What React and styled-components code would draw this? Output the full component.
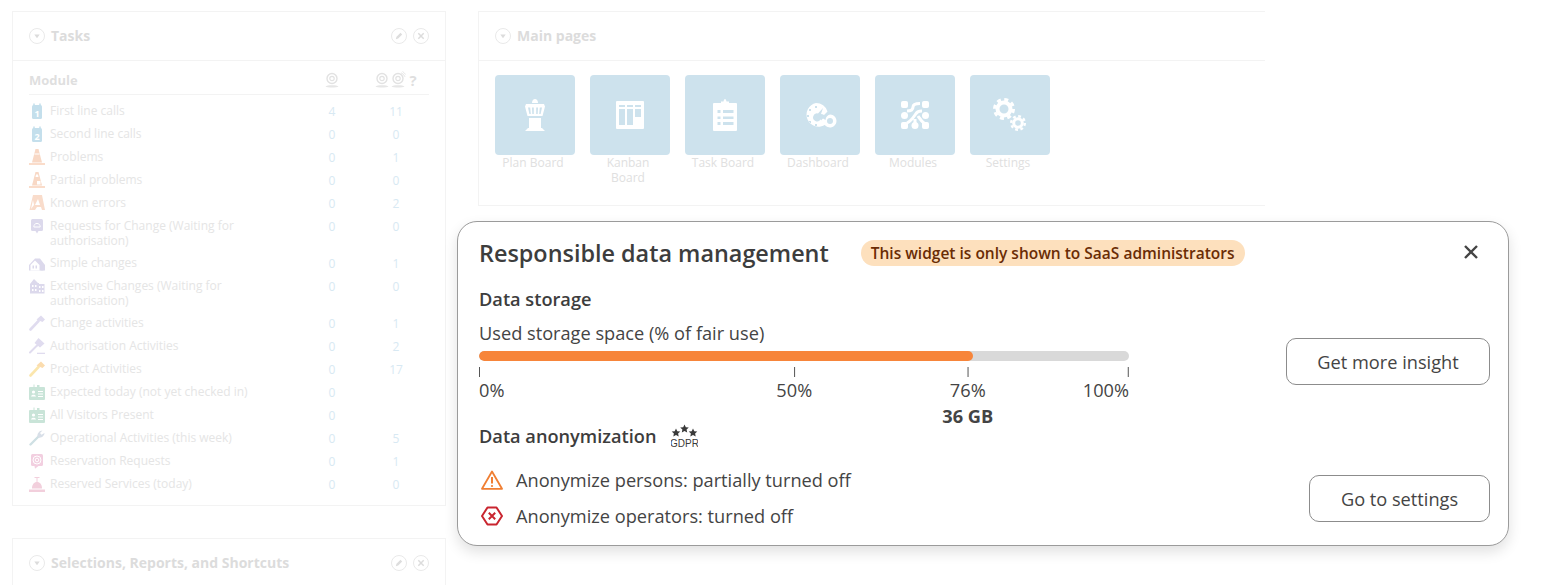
import React from 'react';
import styled, { createGlobalStyle } from 'styled-components';

const GlobalStyle = createGlobalStyle`
  html, body {
    margin: 0;
    padding: 0;
    background: #fff;
    font-family: "Open Sans", "Liberation Sans", sans-serif;
  }
`;

const Page = styled.div`
  position: relative;
  box-sizing: border-box;
  height: 585px;
  overflow: hidden;
  display: flex;
  align-items: flex-start;
  gap: 32px;
  padding: 11px 0 0 12px;
`;

const LeftColumn = styled.div`
  width: 434px;
  display: flex;
  flex-direction: column;
  gap: 32px;
`;

const Panel = styled.section`
  box-sizing: border-box;
  width: ${({ $width }) => $width}px;
  border: 1px solid #f3f3f3;
  ${({ $open }) => $open && 'border-right: none;'}
`;

const PanelHeader = styled.header`
  height: 49px;
  box-sizing: border-box;
  display: flex;
  align-items: center;
  gap: 6px;
  padding: 0 16px 1px;
  border-bottom: 1px solid #f3f3f3;
`;

const PanelTitle = styled.h2`
  margin: 0;
  flex: 1;
  font-size: 14px;
  font-weight: 700;
  color: #dcdcdc;
`;

const HeaderIcons = styled.div`
  display: flex;
  gap: 6px;
`;

const PanelBody = styled.div`
  padding: 10px 16px 10px;
`;

const TableRow = styled.div`
  display: grid;
  grid-template-columns: 21px 250px 64px 64px;
  min-height: 23px;
  align-items: start;
  color: #e5e5e5;
  font-size: 12px;
  line-height: 15px;
  padding-top: 4px;
  box-sizing: border-box;
`;

const TableHead = styled(TableRow)`
  min-height: 0;
  height: 24px;
  padding-top: 0;
  margin-bottom: 4px;
  border-bottom: 1px solid #f3f3f3;
  font-size: 13px;
  font-weight: 700;
  color: #dfdfdf;
  line-height: 18px;
`;

const HeadLabel = styled.span`
  grid-column: 1 / span 2;
`;

const HeadIcons = styled.span`
  display: flex;
  justify-content: center;
  align-items: center;
  padding-right: ${({ $pad }) => $pad || 0}px;
`;

const HelpMark = styled.span`
  margin-left: 3px;
  font-size: 15px;
`;

const RowIcon = styled.span`
  display: block;
  width: 16px;
  height: 16px;
`;

const RowLabel = styled.span`
  max-width: 205px;
  ${({ $wrap }) => $wrap && 'padding-bottom: 3px;'}
`;

const RowCount = styled.span`
  text-align: center;
  color: #d8e9f3;
  padding-top: 1px;
`;

const TileRow = styled.div`
  display: flex;
  gap: 15px;
  padding: 14px 16px 20px;
`;

const Tile = styled.div`
  width: 80px;
  display: flex;
  flex-direction: column;
`;

const TileSquare = styled.div`
  height: 80px;
  border-radius: 4px;
  background: #cde2ed;
  display: flex;
  align-items: center;
  justify-content: center;
`;

const TileLabel = styled.span`
  padding-right: 4px;
  text-align: center;
  font-size: 12px;
  line-height: 15px;
  color: #e0e0e0;
`;

const Card = styled.div`
  position: absolute;
  left: 457px;
  top: 221px;
  width: 1052px;
  height: 325px;
  box-sizing: border-box;
  padding: 16px 18px 0 21px;
  background: #fff;
  border: 1px solid #9b9b9b;
  border-radius: 20px;
  box-shadow: 0 6px 14px rgba(0, 0, 0, 0.12);
  color: #444;
`;

const CardHeader = styled.div`
  display: flex;
  align-items: center;
  height: 30px;
`;

const CardTitle = styled.h1`
  margin: 0 32px 0 0;
  font-size: 23.4px;
  line-height: 30px;
  font-weight: 600;
  color: #3d3d3d;
`;

const Badge = styled.span`
  padding: 0 10px;
  height: 26px;
  line-height: 26px;
  border-radius: 13px;
  background: #fde0bd;
  color: #6a2c05;
  font-size: 15.5px;
  font-weight: 600;
`;

const CloseButton = styled.button`
  margin: 0 11px 2px auto;
  padding: 0;
  border: 0;
  background: none;
  display: flex;
`;

const StorageRow = styled.div`
  display: flex;
  justify-content: space-between;
  align-items: flex-start;
  margin-top: 19px;
  height: 137px;
`;

const SectionTitle = styled.h3`
  display: flex;
  align-items: center;
  gap: 15px;
  margin: 0;
  font-size: 18.2px;
  line-height: 24px;
  font-weight: 600;
  color: #3d3d3d;
`;

const StorageBlock = styled.div`
  width: 650px;
`;

const UsageCaption = styled.div`
  margin-top: 10px;
  font-size: 18.2px;
  line-height: 24px;
`;

const Track = styled.div`
  height: 10px;
  margin-top: 6px;
  border-radius: 5px;
  background: #d9d9d9;
  overflow: hidden;
`;

const Fill = styled.div`
  height: 100%;
  border-radius: 5px;
  background: #f7853a;
`;

const Scale = styled.div`
  position: relative;
  height: 64px;
`;

const Mark = styled.div`
  position: absolute;
  top: 6px;
  display: flex;
  flex-direction: column;
  align-items: ${({ $align }) => $align};
  transform: translateX(${({ $shift }) => $shift});
  font-size: 18.2px;
  line-height: 24px;
`;

const Tick = styled.i`
  display: block;
  width: 1px;
  height: 10px;
  background: #555;
`;

const MarkLabel = styled.span`
  margin-top: 1px;
`;

const MarkValue = styled.strong`
  margin-top: 2px;
  font-weight: 700;
`;

const OutlineButton = styled.button`
  box-sizing: border-box;
  height: 47px;
  width: ${({ $width }) => $width}px;
  margin-top: ${({ $top }) => $top}px;
  background: #fff;
  border: 1px solid #8c8c8c;
  border-radius: 10px;
  color: #444;
  font-family: inherit;
  font-size: 18.2px;
`;

const AnonymRow = styled.div`
  display: flex;
  justify-content: space-between;
  align-items: flex-start;
`;

const StatusList = styled.ul`
  list-style: none;
  margin: 20px 0 0;
  padding: 0 0 0 2px;
  display: flex;
  flex-direction: column;
  gap: 12px;
`;

const StatusItem = styled.li`
  display: flex;
  align-items: center;
  gap: 13px;
  font-size: 18.2px;
  line-height: 24px;
`;

const GdprMark = styled.svg`
  display: block;
`;

const Ring = ({ children }) => (
  <svg width="16" height="16" viewBox="0 0 16 16" fill="none">
    <circle cx="8" cy="8" r="7.5" stroke="#e9e9e9" />
    {children}
  </svg>
);

const ToggleIcon = () => (
  <Ring>
    <path d="M5.3 6.5h5.4L8 10.2z" fill="#dcdcdc" />
  </Ring>
);

const EditIcon = () => (
  <Ring>
    <path d="M4.8 11.2l.7-2.4 4-4 1.7 1.7-4 4z" fill="#dddddd" />
  </Ring>
);

const DismissIcon = () => (
  <Ring>
    <path d="M5.3 5.3l5.4 5.4M10.7 5.3l-5.4 5.4" stroke="#dcdcdc" strokeWidth="1.5" />
  </Ring>
);

const OperatorIcon = ({ second }) => (
  <svg width="16" height="18" viewBox="0 0 16 18" fill="none">
    <circle cx="8" cy="7.500" r="5" stroke="#e2e2e2" strokeWidth="1.4" />
    <circle cx="8" cy="7.500" r="2.200" stroke="#e2e2e2" strokeWidth="1.2" />
    <path d="M1.500 15.500c1.500-1.800 11.500-1.800 13 0-1.500 1.400-11.500 1.400-13 0z" fill="#e6e6e6" />
    {second && <path d="M11 1.800a7 7 0 0 1 4 4M12.500.5a8 8 0 0 1 3 3" stroke="#e6e6e6" />}
  </svg>
);

const ICONS = {
  call1: (
    <>
      <rect x="3" y="2" width="10" height="14" rx="1.500" fill="#c4dfec" />
      <path d="M5 .5v3M11 .5v3" stroke="#c4dfec" strokeWidth="1.500" />
      <text x="8" y="13.500" textAnchor="middle" fontSize="9" fontWeight="700" fill="#fff" fontFamily="Open Sans">1</text>
    </>
  ),
  call2: (
    <>
      <rect x="3" y="2" width="10" height="14" rx="1.500" fill="#c4dfec" />
      <path d="M5 .5v3M11 .5v3" stroke="#c4dfec" strokeWidth="1.500" />
      <text x="8" y="13.500" textAnchor="middle" fontSize="9" fontWeight="700" fill="#fff" fontFamily="Open Sans">2</text>
    </>
  ),
  cone: (
    <>
      <path d="M6.500 0h3L13 13.500H3z" fill="#f8d8c5" />
      <path d="M5.400 5h5.200" stroke="#fff" />
      <path d="M0 15h16" stroke="#f8d0b8" strokeWidth="1.500" />
    </>
  ),
  partial: (
    <>
      <path d="M6.500 0h3L13 13.500H3z" fill="#f8d8c5" />
      <path d="M7 2.500h2l.5 2.500h-3zM8 9h3.500v3.500H8z" fill="#fff" />
      <path d="M0 15h16" stroke="#f8d0b8" strokeWidth="1.500" />
    </>
  ),
  errors: (
    <>
      <path d="M4 0h9l3 15h-3l-1-3H8l-2 3H.5z" fill="#f9dccb" />
      <path d="M9 4l2 6H6z" fill="#fff" />
      <path d="M4 5l1 5-3 4z" fill="#fff" />
    </>
  ),
  request: (
    <>
      <rect x="2" y="1" width="12" height="12" rx="1.500" fill="#dcd9ec" />
      <path d="M6.500 13h3L8 15.500z" fill="#dcd9ec" />
      <path d="M4.800 9h6.400c0-2.200-1.400-3.600-3.200-3.600S4.800 6.800 4.800 9z" stroke="#fff" fill="none" />
    </>
  ),
  house: (
    <>
      <path d="M0 10L6 3.500h5L16 10v5.500H0z" fill="#dcd9ec" />
      <path d="M1.500 10L6 5.500 10.500 10v5.500h-9z" fill="#fff" />
      <path d="M3.500 10.500h1.500v3H3.500zM6.500 10.500H8v3H6.500zM11.500 11h3v4.500h-3z" fill="#dcd9ec" />
    </>
  ),
  building: (
    <>
      <path d="M1 6l4-5 4 4h1v1h5.500v9.500H1z" fill="#dcd9ec" />
      <path d="M3 7h1.500v2H3zM6 7h1.500v2H6zM3 11h1.500v2H3zM6 11h1.500v2H6zM10 8h1.500v2H10zM13 8h1.500v2H13zM10 12h1.500v2H10zM13 12h1.500v2H13z" fill="#fff" />
    </>
  ),
  hammer: (
    <>
      <path d="M1.500 14.500L9.500 6" stroke="#e0dcef" strokeWidth="2.600" strokeLinecap="round" />
      <path d="M7.500 4.500L12 .5l4 4-2.500 2.500z" fill="#e0dcef" />
    </>
  ),
  gavel: (
    <>
      <path d="M1 14.500L8 7.500" stroke="#e0dcef" strokeWidth="2" strokeLinecap="round" />
      <path d="M5.500 5L9.500 0l6 5.500-4.500 4z" fill="#e0dcef" />
      <path d="M8 15.500h8" stroke="#e0dcef" strokeWidth="1.600" />
    </>
  ),
  project: (
    <>
      <path d="M1.500 14.500L9.500 6" stroke="#fbe6ad" strokeWidth="2.600" strokeLinecap="round" />
      <path d="M7.500 4.500L12 .5l4 4-2.500 2.500z" fill="#fbdcae" />
    </>
  ),
  visitor: (
    <>
      <rect x="0" y="3" width="16" height="13" rx="1" fill="#c9e4d8" />
      <path d="M5 .5v3" stroke="#c9e4d8" />
      <path d="M8 1h2.500v2H8z" fill="#c9e4d8" />
      <circle cx="4.500" cy="8" r="1.600" fill="#fff" />
      <path d="M2 12.500c.3-2.500 4.700-2.500 5 0zM9 7h5v1H9zM9 9.500h5v1H9zM9 12h5v1H9z" fill="#fff" />
    </>
  ),
  wrench: (
    <>
      <path d="M1.500 14.500L10 6" stroke="#cfe0e4" strokeWidth="2.400" strokeLinecap="round" />
      <path d="M8.500 6.500c-.5-3 2-6 5-6L11 3l1.500 1.800L15.500 3c0 3-3.500 5.500-6 4.500z" fill="#d8dfe8" />
    </>
  ),
  target: (
    <>
      <rect x="2" y="1" width="12" height="12" rx="1.500" fill="#f2cfe0" />
      <path d="M5.500 13h4L6 15.800z" fill="#f2cfe0" />
      <circle cx="8" cy="7" r="4" stroke="#fff" fill="none" />
      <circle cx="8" cy="7" r="1.800" stroke="#fff" fill="none" />
    </>
  ),
  bell: (
    <>
      <path d="M3 12.500c0-4 2-6.500 5-6.500s5 2.500 5 6.500z" fill="#f2cfdc" />
      <path d="M8 6V2M5.500 1.500h5" stroke="#f2cfdc" />
      <path d="M0 13.500h16v2.500H0z" fill="#f2cfdc" />
    </>
  ),
};

const SmallIcon = ({ name }) => (
  <RowIcon as="svg" width="16" height="16" viewBox="0 0 16 16">
    {ICONS[name]}
  </RowIcon>
);

const TILE_ICONS = {
  tower: (
    <>
      <path d="M17 8c0-2.600 1.500-4 3-4s3 1.400 3 4z" />
      <path fillRule="evenodd" d="M11 9h18l1 2.500-2.500 9.500h-15L10 11.500zM13 12.500l1.400 6.500h1.400l-.6-6.500zM17 12.500l.3 6.500h1.500v-6.500zM21.200 12.500v6.500h1.500l.3-6.500zM24.800 12.500l-.6 6.500h1.400l1.400-6.500z" />
      <path d="M14 23h12v10H14zM13 33h14l3 3H10z" />
    </>
  ),
  kanban: (
    <path fillRule="evenodd" d="M7 6h26a1 1 0 0 1 1 1v26a1 1 0 0 1-1 1H7a1 1 0 0 1-1-1V7a1 1 0 0 1 1-1zM9 10v2h6v-2zM17 10v2h6v-2zM25 10v2h6v-2zM9 14v16h6V14zM17 14v16h6V14zM25 14v8h6v-8z" />
  ),
  clipboard: (
    <path fillRule="evenodd" d="M16 6.500h2.500c.3-1.500.8-2.500 1.500-2.500s1.200 1 1.500 2.500H24v1.500h7a1 1 0 0 1 1 1V35a1 1 0 0 1-1 1H9a1 1 0 0 1-1-1V9a1 1 0 0 1 1-1h7zM12.500 15v3h3v-3zM18 15v3h10.500v-3zM12.500 21.500v2.500h3v-2.500zM18 21.500v2.500h10.500v-2.500zM12.500 27v3h3v-3zM18 27v3h10.500v-3z" />
  ),
  dashboard: (
    <>
      <path fillRule="evenodd" d="M16 8a12 12 0 0 1 11.500 8.500L24 20a6 6 0 0 0-3-1l2-6-5 5.500a4 4 0 1 0 2.500 6l5 5A12 12 0 1 1 16 8zM15 11v2h2v-2zM9 14v2h2v-2zM7 20v2h2v-2zM9 26v2h2v-2zM15 29v2h2v-2z" />
      <path fillRule="evenodd" d="M30 19.500a6.500 6.500 0 1 1-5 10.700L21 25.500l2-2 2.500 1.500A6.500 6.500 0 0 1 30 19.500zm0 3.500a3 3 0 1 0 0 6 3 3 0 0 0 0-6z" />
    </>
  ),
  modules: (
    <>
      <g stroke="#fff" strokeWidth="3" fill="none">
        <path d="M12 16c4 0 6-1 6-4 0-2 2-3.500 7-3.500M12 28c4-2 6-5 8-8s3-4 7-4M20 24v4M23 21c2 3 3 5 7 8" />
      </g>
      <rect x="6" y="6" width="7" height="7" rx="2" />
      <rect x="6" y="17" width="7" height="7" rx="3.500" />
      <rect x="6" y="27" width="7" height="7" rx="2" />
      <rect x="16.500" y="27" width="7" height="7" rx="3.500" />
      <rect x="27" y="27" width="7" height="7" rx="2" />
      <rect x="27" y="17" width="7" height="7" rx="3.500" />
      <rect x="27" y="6" width="7" height="7" rx="2" />
    </>
  ),
  gears: (
    <g fill="none" stroke="#fff">
      <circle cx="14" cy="14" r="6.500" strokeWidth="4" />
      <circle cx="14" cy="14" r="9.500" strokeWidth="3" strokeDasharray="4 3.460" />
      <circle cx="28" cy="28" r="4.300" strokeWidth="3" />
      <circle cx="28" cy="28" r="6.800" strokeWidth="2.400" strokeDasharray="2.800 2.540" />
    </g>
  ),
};

const TileIcon = ({ name }) => (
  <svg width="40" height="40" viewBox="0 0 40 40" fill="#fff">
    {TILE_ICONS[name]}
  </svg>
);

const GdprIcon = () => (
  <GdprMark width="27" height="24" viewBox="0 0 27 24" fill="#3a3a3a">
    <path d="M5 4.500l1.300 2.700 3 .4-2.200 2 .6 3-2.700-1.500-2.700 1.500.6-3-2.200-2 3-.4z" />
    <path d="M13.500.5l1.300 2.700 3 .4-2.200 2 .6 3-2.700-1.500-2.700 1.500.6-3-2.200-2 3-.4z" />
    <path d="M22 4.500l1.300 2.700 3 .4-2.200 2 .6 3-2.700-1.500-2.700 1.500.6-3-2.200-2 3-.4z" />
    <text x="13.500" y="23" textAnchor="middle" fontSize="10" fontWeight="400" fontFamily="Liberation Sans">GDPR</text>
  </GdprMark>
);

const WarningIcon = () => (
  <svg width="22" height="20" viewBox="0 0 22 20" fill="none">
    <path d="M11 1.500L21 18.800H1z" stroke="#f07f33" strokeWidth="1.800" strokeLinejoin="round" />
    <path d="M11 7v6.500" stroke="#f07f33" strokeWidth="2" />
    <circle cx="11" cy="16" r="1.100" fill="#f07f33" />
  </svg>
);

const ErrorIcon = () => (
  <svg width="22" height="20" viewBox="0 0 22 20" fill="none">
    <path d="M6.500 1.500h9L21 10l-5.500 8.500h-9L1 10z" stroke="#c9252f" strokeWidth="2" strokeLinejoin="round" />
    <path d="M7.800 6.800l6.400 6.400M14.200 6.800l-6.400 6.400" stroke="#c9252f" strokeWidth="2" />
  </svg>
);

const rows = [
  { icon: 'call1', label: 'First line calls', a: 4, b: 11 },
  { icon: 'call2', label: 'Second line calls', a: 0, b: 0 },
  { icon: 'cone', label: 'Problems', a: 0, b: 1 },
  { icon: 'partial', label: 'Partial problems', a: 0, b: 0 },
  { icon: 'errors', label: 'Known errors', a: 0, b: 2 },
  { icon: 'request', label: 'Requests for Change (Waiting for authorisation)', a: 0, b: 0, wrap: true },
  { icon: 'house', label: 'Simple changes', a: 0, b: 1 },
  { icon: 'building', label: 'Extensive Changes (Waiting for authorisation)', a: 0, b: 0, wrap: true },
  { icon: 'hammer', label: 'Change activities', a: 0, b: 1 },
  { icon: 'gavel', label: 'Authorisation Activities', a: 0, b: 2 },
  { icon: 'project', label: 'Project Activities', a: 0, b: 17 },
  { icon: 'visitor', label: 'Expected today (not yet checked in)', a: 0 },
  { icon: 'visitor', label: 'All Visitors Present', a: 0 },
  { icon: 'wrench', label: 'Operational Activities (this week)', a: 0, b: 5 },
  { icon: 'target', label: 'Reservation Requests', a: 0, b: 1 },
  { icon: 'bell', label: 'Reserved Services (today)', a: 0, b: 0 },
];

const tiles = [
  { icon: 'tower', label: 'Plan Board' },
  { icon: 'kanban', label: 'Kanban Board' },
  { icon: 'clipboard', label: 'Task Board' },
  { icon: 'dashboard', label: 'Dashboard' },
  { icon: 'modules', label: 'Modules' },
  { icon: 'gears', label: 'Settings' },
];

const marks = [
  { at: 0, label: '0%', align: 'flex-start', shift: '0' },
  { at: 48.5, label: '50%', align: 'center', shift: '-50%' },
  { at: 75.2, label: '76%', align: 'center', shift: '-50%', value: '36 GB' },
  { at: 100, label: '100%', align: 'flex-end', shift: '-100%' },
];

const PanelHead = ({ title, tools }) => (
  <PanelHeader>
    <ToggleIcon />
    <PanelTitle>{title}</PanelTitle>
    {tools && (
      <HeaderIcons>
        <EditIcon />
        <DismissIcon />
      </HeaderIcons>
    )}
  </PanelHeader>
);

const App = () => (
  <Page>
    <GlobalStyle />
    <LeftColumn>
      <Panel $width={434}>
        <PanelHead title="Tasks" tools />
        <PanelBody>
          <TableHead>
            <HeadLabel>Module</HeadLabel>
            <HeadIcons>
              <OperatorIcon />
            </HeadIcons>
            <HeadIcons $pad={1}>
              <OperatorIcon />
              <OperatorIcon second />
              <HelpMark>?</HelpMark>
            </HeadIcons>
          </TableHead>
          {rows.map((row) => (
            <TableRow key={row.label}>
              <SmallIcon name={row.icon} />
              <RowLabel $wrap={row.wrap}>{row.label}</RowLabel>
              <RowCount>{row.a}</RowCount>
              <RowCount>{row.b}</RowCount>
            </TableRow>
          ))}
        </PanelBody>
      </Panel>
      <Panel $width={434}>
        <PanelHead title="Selections, Reports, and Shortcuts" tools />
      </Panel>
    </LeftColumn>

    <Panel $width={787} $open>
      <PanelHead title="Main pages" />
      <TileRow>
        {tiles.map((tile) => (
          <Tile key={tile.label}>
            <TileSquare>
              <TileIcon name={tile.icon} />
            </TileSquare>
            <TileLabel>{tile.label}</TileLabel>
          </Tile>
        ))}
      </TileRow>
    </Panel>

    <Card>
      <CardHeader>
        <CardTitle>Responsible data management</CardTitle>
        <Badge>This widget is only shown to SaaS administrators</Badge>
        <CloseButton aria-label="Close">
          <svg width="16" height="16" viewBox="0 0 16 16" fill="none">
            <path d="M2 2l12 12M14 2L2 14" stroke="#444" strokeWidth="2.400" />
          </svg>
        </CloseButton>
      </CardHeader>

      <StorageRow>
        <StorageBlock>
          <SectionTitle>Data storage</SectionTitle>
          <UsageCaption>Used storage space (% of fair use)</UsageCaption>
          <Track>
            <Fill style={{ width: '76%' }} />
          </Track>
          <Scale>
            {marks.map((mark) => (
              <Mark key={mark.label} $align={mark.align} $shift={mark.shift} style={{ left: `${mark.at}%` }}>
                <Tick />
                <MarkLabel>{mark.label}</MarkLabel>
                {mark.value && <MarkValue>{mark.value}</MarkValue>}
              </Mark>
            ))}
          </Scale>
        </StorageBlock>
        <OutlineButton $width={204} $top={51}>Get more insight</OutlineButton>
      </StorageRow>

      <AnonymRow>
        <div>
          <SectionTitle>
            Data anonymization
            <GdprIcon />
          </SectionTitle>
          <StatusList>
            <StatusItem>
              <WarningIcon />
              Anonymize persons: partially turned off
            </StatusItem>
            <StatusItem>
              <ErrorIcon />
              Anonymize operators: turned off
            </StatusItem>
          </StatusList>
        </div>
        <OutlineButton $width={181} $top={51}>Go to settings</OutlineButton>
      </AnonymRow>
    </Card>
  </Page>
);

export default App;
